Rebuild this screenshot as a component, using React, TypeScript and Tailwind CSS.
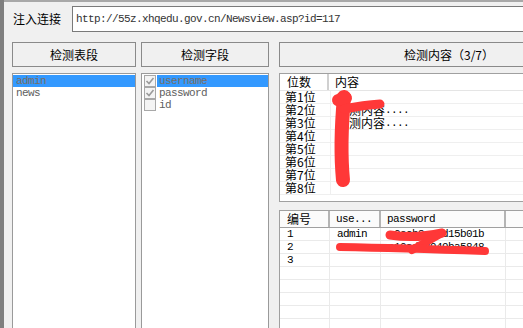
import React from 'react';

const cjk = "font-['Noto_Sans_CJK_SC',sans-serif]";
const mono = "font-['Liberation_Mono','Noto_Sans_CJK_SC',monospace] text-[11px] tracking-[-0.6px]";

function Check({ on }: { on: boolean }) {
  return (
    <div className="w-[12px] h-[12px] shrink-0 border border-[#a8a8a8] bg-[#f4f4f4] flex items-center justify-center">
      {on && (
        <svg width="10" height="10" viewBox="0 0 10 10">
          <polyline points="1.5,5 4,7.5 8.5,2" fill="none" stroke="#9a9a9a" strokeWidth="1.6" />
        </svg>
      )}
    </div>
  );
}

const positions = ['第1位', '第2位', '第3位', '第4位', '第5位', '第6位', '第7位', '第8位'];
const contents = ['2', '检测内容', '检测内容', '', '', '', '', ''];

const users = [
  { id: '1', name: 'admin', pass: 'a0ecb8ac2d15b01b' },
  { id: '2', name: 'news', pass: 'e10adc3949ba5848' },
  { id: '3', name: '', pass: '' },
  { id: '', name: '', pass: '' },
  { id: '', name: '', pass: '' },
  { id: '', name: '', pass: '' },
  { id: '', name: '', pass: '' },
  { id: '', name: '', pass: '' },
];

export default function App() {
  return (
    <div className="w-[523px] h-[328px] overflow-hidden bg-[#f0f0f0] flex text-black">
      <div className="w-[4px] shrink-0 bg-[#7f7f7f]" />
      <div className="flex flex-col shrink-0 w-[700px]">
        <div className="h-[2px] shrink-0 bg-[#a8a8a8]" />

        {/* url row */}
        <div className="mt-[4px] shrink-0 flex items-center h-[26px]">
          <span className={`${cjk} text-[12px] ml-[9px] w-[48px] leading-none`}>注入连接</span>
          <div className="ml-[11px] w-[470px] h-[26px] shrink-0 border border-[#7a7a7a] bg-white flex items-center pl-[3px]">
            <span className={`${mono} text-[#333]`}>http://55z.xhqedu.gov.cn/Newsview.asp?id=117</span>
          </div>
        </div>

        {/* buttons */}
        <div className="mt-[10px] shrink-0 flex h-[25px]">
          <button className={`${cjk} text-[12px] ml-[8px] w-[124px] shrink-0 border border-[#8a8a8a] bg-[#f0f0f0]`}>检测表段</button>
          <button className={`${cjk} text-[12px] ml-[5px] w-[128px] shrink-0 border border-[#8a8a8a] bg-[#f0f0f0]`}>检测字段</button>
          <button className={`${cjk} text-[12px] ml-[10px] w-[340px] shrink-0 border border-[#8a8a8a] bg-[#f0f0f0]`}>检测内容（3/7）</button>
        </div>

        {/* lists */}
        <div className="mt-[6px] shrink-0 flex h-[300px]">
          <div className="ml-[8px] w-[124px] shrink-0 border border-[#9a9a9a] bg-white pt-[1px]">
            <div className={`${mono} h-[12px] leading-[12px] bg-[#3399ff] text-[#7a6e64] pl-[3px]`}>admin</div>
            <div className={`${mono} h-[12px] leading-[12px] text-[#606060] pl-[3px]`}>news</div>
          </div>

          <div className="ml-[5px] w-[128px] shrink-0 border border-[#9a9a9a] bg-white pt-[1px] pl-[2px]">
            {[
              { t: 'username', on: true, sel: true },
              { t: 'password', on: true, sel: false },
              { t: 'id', on: false, sel: false },
            ].map((r) => (
              <div key={r.t} className="flex items-center h-[12px]">
                <Check on={r.on} />
                <div
                  className={`${mono} ml-[1px] flex-1 h-[12px] leading-[12px] pl-[2px] ${
                    r.sel ? 'bg-[#3399ff] text-[#7a6e64]' : 'text-[#606060]'
                  }`}
                >
                  {r.t}
                </div>
              </div>
            ))}
          </div>

          <div className="ml-[10px] w-[340px] shrink-0 flex flex-col">
            {/* content list */}
            <div className="relative shrink-0 h-[129px] border border-[#a0a0a0] bg-white overflow-hidden">
              <div className={`${cjk} text-[12px] flex h-[17px] leading-[16px] border-b border-[#e5e5e5]`}>
                <div className="w-[49px] pl-[7px] border-r-2 border-[#d0d0d0]">位数</div>
                <div className="pl-[6px]">内容</div>
              </div>
              {positions.map((p, i) => (
                <div key={p} className={`${cjk} text-[12px] flex h-[13px] leading-[12px] border-b border-[#efefef]`}>
                  <div className="w-[51px] pl-[5px] border-r border-[#efefef]">{p}</div>
                  <div className="pl-[6px] flex">
                    <span>{contents[i]}</span>
                    {contents[i].length > 1 && <span className={mono}>....</span>}
                  </div>
                </div>
              ))}
              <svg className="absolute left-0 top-0" width="200" height="129">
                <path d="M64 23 C62 45, 60 75, 63 106" fill="none" stroke="#ff3838" strokeWidth="14" strokeLinecap="round" />
                <path d="M58 26 L66 24" fill="none" stroke="#ff3838" strokeWidth="12" strokeLinecap="round" />
                <path d="M64 35 Q84 31 100 30" fill="none" stroke="#ff3838" strokeWidth="9" strokeLinecap="round" />
              </svg>
            </div>

            {/* result grid */}
            <div className="relative shrink-0 mt-[8px] h-[200px] border border-[#a0a0a0] bg-white overflow-hidden">
              <div className="flex h-[17px] leading-[16px] border-b border-[#a0a0a0] bg-[#fbfbfb]">
                <div className={`${cjk} text-[12px] w-[50px] pl-[7px] border-r-2 border-[#b4b4b4]`}>编号</div>
                <div className={`${mono} w-[51px] pl-[6px] border-r-2 border-[#b4b4b4]`}>use...</div>
                <div className={`${mono} w-[125px] pl-[6px] border-r-2 border-[#b4b4b4]`}>password</div>
                <div className="flex-1" />
              </div>
              {users.map((u, i) => (
                <div key={i} className={`${mono} flex h-[13px] leading-[12px] border-b border-[#eaeaea] text-black`}>
                  <div className="w-[50px] pl-[7px] border-r border-[#eaeaea]">{u.id}</div>
                  <div className="w-[51px] pl-[7px] border-r border-[#eaeaea]">{u.name}</div>
                  <div className="w-[125px] pl-[7px] border-r border-[#eaeaea]">{u.pass}</div>
                  <div className="flex-1" />
                </div>
              ))}
              <svg className="absolute left-0 top-0" width="240" height="60">
                <path d="M110 24 Q135 28 162 22" fill="none" stroke="#ff3838" strokeWidth="9" strokeLinecap="round" />
                <path d="M162 22 L132 39" fill="none" stroke="#ff3838" strokeWidth="8" strokeLinecap="round" />
                <path d="M60 36 Q120 37 205 40" fill="none" stroke="#ff3838" strokeWidth="8" strokeLinecap="round" />
              </svg>
            </div>
          </div>
        </div>
      </div>
    </div>
  );
}
